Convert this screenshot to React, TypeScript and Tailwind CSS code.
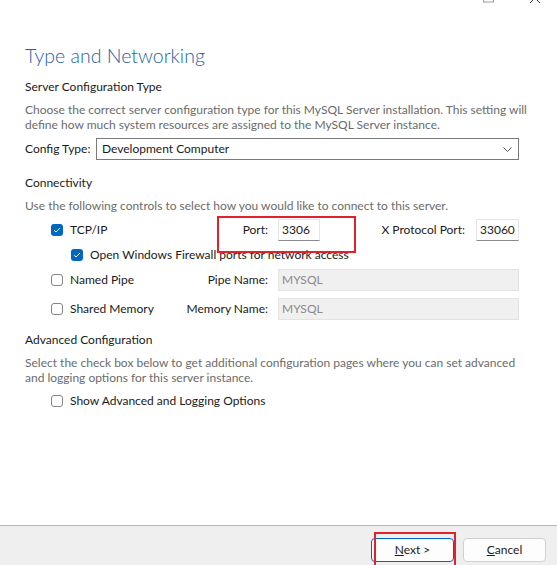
import React from 'react';

const Check = ({ checked }: { checked?: boolean }) =>
  checked ? (
    <span className="w-[12px] h-[12px] rounded-[3px] bg-[#0067c0] flex items-center justify-center shrink-0">
      <svg width="8" height="6" viewBox="0 0 8 6" fill="none">
        <path d="M1 3.2 L3 5 L7 1" stroke="white" strokeWidth="1" />
      </svg>
    </span>
  ) : (
    <span className="w-[12px] h-[12px] rounded-[3px] border border-[#858585] bg-white shrink-0" />
  );

const Field = ({ value, disabled, className }: { value: string; disabled?: boolean; className?: string }) => (
  <div
    className={
      'h-[22px] flex items-center px-[3px] border ' +
      (disabled
        ? 'bg-[#f0f0f0] border-[#e3e3e3] text-[#8a8a8a] '
        : 'bg-white border-[#e5e5e5] border-b-[#8a8a8a] text-[#1a1a1a] ') +
      (className || '')
    }
  >
    {value}
  </div>
);

const Button = ({ label, hot, focused }: { label: string; hot: string; focused?: boolean }) => (
  <button
    className={
      'w-[83px] h-[24px] rounded-[4px] text-[12px] text-[#1a1a1a] bg-[#fdfdfd] border ' +
      (focused ? 'border-[#0067c0]' : 'border-[#d0d0d0]')
    }
  >
    <span className="underline">{hot}</span>
    {label}
  </button>
);

export default function App() {
  return (
    <div className="w-[557px] h-[565px] bg-white flex flex-col relative font-['Lato',sans-serif] text-[12px] text-[#1a1a1a] overflow-hidden whitespace-nowrap">
      {/* window controls, cut off at the top */}
      <div className="h-0 flex justify-end pr-[17px] gap-[36px]">
        <svg width="11" height="3" viewBox="0 0 11 3" className="overflow-visible">
          <rect x="0.5" y="-8" width="10" height="10" fill="none" stroke="#9a9a9a" />
        </svg>
        <svg width="10" height="3" viewBox="0 0 10 3" className="overflow-visible">
          <path d="M0 -7 L10 3 M10 -7 L0 3" stroke="#333" strokeWidth="1" />
        </svg>
      </div>

      <div className="flex-1 pl-[25px] pr-[38px] flex flex-col">
        <div className="mt-[44px] h-[24px] leading-[24px] text-[19.5px] font-light text-[#1f62a3]">Type and Networking</div>

        <div className="mt-[11px] h-[16px] leading-[16px]">Server Configuration Type</div>
        <div className="mt-[7px] leading-[15px] text-[#6b6b6b]">
          Choose the correct server configuration type for this MySQL Server installation. This setting will
          <br />
          define how much system resources are assigned to the MySQL Server instance.
        </div>

        <div className="mt-[6px] h-[22px] flex items-center">
          <span className="w-[71px]">Config Type:</span>
          <div className="flex-1 h-[22px] border border-[#7a7a7a] flex items-center justify-between pl-[5px] pr-[6px]">
            <span>Development Computer</span>
            <svg width="9" height="5" viewBox="0 0 9 5" fill="none">
              <path d="M0.5 0.5 L4.5 4.5 L8.5 0.5" stroke="#555" strokeWidth="1" />
            </svg>
          </div>
        </div>

        <div className="mt-[15px] h-[16px] leading-[16px]">Connectivity</div>
        <div className="mt-[7px] leading-[15px] text-[#6b6b6b]">
          Use the following controls to select how you would like to connect to this server.
        </div>

        <div className="mt-[6px] h-[22px] flex items-center pl-[26px]">
          <div className="w-[217px] flex items-center">
            <Check checked />
            <span className="ml-[7px]">TCP/IP</span>
            <span className="ml-auto">Port:</span>
          </div>
          <Field value="3306" className="ml-[10px] w-[42px]" />
          <span className="ml-auto">X Protocol Port:</span>
          <Field value="33060" className="ml-[11px] w-[43px]" />
        </div>

        <div className="mt-[6px] h-[16px] flex items-center pl-[46px]">
          <Check checked />
          <span className="ml-[7px]">Open Windows Firewall ports for network access</span>
        </div>

        <div className="mt-[6px] h-[22px] flex items-center pl-[26px]">
          <div className="w-[217px] flex items-center">
            <Check />
            <span className="ml-[7px]">Named Pipe</span>
            <span className="ml-auto">Pipe Name:</span>
          </div>
          <Field value="MYSQL" disabled className="ml-[10px] flex-1" />
        </div>

        <div className="mt-[7px] h-[22px] flex items-center pl-[26px]">
          <div className="w-[217px] flex items-center">
            <Check />
            <span className="ml-[7px]">Shared Memory</span>
            <span className="ml-auto">Memory Name:</span>
          </div>
          <Field value="MYSQL" disabled className="ml-[10px] flex-1" />
        </div>

        <div className="mt-[12px] h-[16px] leading-[16px]">Advanced Configuration</div>
        <div className="mt-[7px] leading-[15px] text-[#6b6b6b]">
          Select the check box below to get additional configuration pages where you can set advanced
          <br />
          and logging options for this server instance.
        </div>

        <div className="mt-[8px] h-[16px] flex items-center pl-[26px]">
          <Check />
          <span className="ml-[7px]">Show Advanced and Logging Options</span>
        </div>
      </div>

      <div className="h-[40px] border-t border-[#b9b9b9] bg-[#efefef] flex justify-end items-start pt-[12px] pr-[11px] gap-[9px]">
        <Button hot="N" label="ext >" focused />
        <Button hot="C" label="ancel" />
      </div>

      {/* red annotation boxes */}
      <div className="absolute left-[217px] top-[216px] w-[139px] h-[37px] border-2 border-[#e3202b]" />
      <div className="absolute left-[374px] top-[532px] w-[82px] h-[40px] border-2 border-[#e3202b]" />
    </div>
  );
}
